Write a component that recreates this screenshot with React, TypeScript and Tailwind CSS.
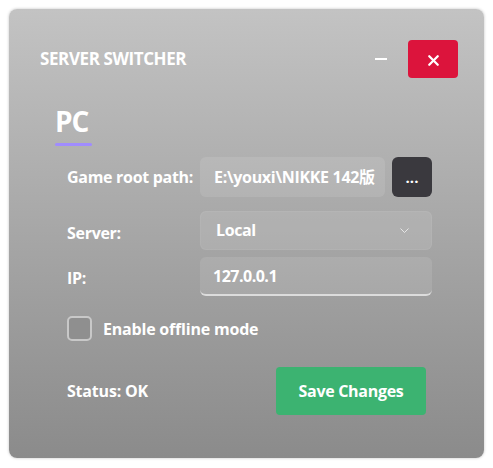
import { X } from "lucide-react"

const font = { fontFamily: '"Open Sans", "Noto Sans CJK SC", sans-serif' }

export default function App() {
  return (
    <div className="w-[493px] h-[468px] bg-white pt-[9px] pl-[9px]" style={font}>
      <div className="w-[475px] h-[449px] rounded-[8px] bg-gradient-to-b from-[#c3c3c3] to-[#8b8b8b] shadow-[0_0_3px_rgba(0,0,0,0.25)] pt-[31px] pl-[31px] pr-[26px] text-white">
        {/* Header */}
        <div className="flex items-center justify-between h-[38px]">
          <span className="text-[17px] font-bold tracking-[-0.4px]">SERVER SWITCHER</span>
          <div className="flex items-center gap-[21px]">
            <div className="w-[12px] h-[2px] bg-white" />
            <button className="w-[50px] h-[38px] rounded-[4px] bg-[#dc143c] flex items-center justify-center pt-[2px]">
              <X className="w-[17px] h-[17px] text-white" strokeWidth={3.2} />
            </button>
          </div>
        </div>

        {/* Tab */}
        <div className="ml-[15px] mt-[26px] w-fit">
          <div className="text-[28px] font-bold leading-[34px] tracking-[-1px]">PC</div>
          <div className="mt-[5px] h-[3px] w-[37px] rounded-full bg-[#a08cff]" />
        </div>

        {/* Form */}
        <div className="ml-[27px] mt-[11px] flex flex-col">
          <div className="flex items-center h-[40px]">
            <span className="w-[133px] text-[16px] font-bold tracking-[-0.3px]">Game root path:</span>
            <div className="w-[185px] h-[40px] rounded-[6px] bg-white/10 flex items-center pl-[14px] text-[16px] font-bold tracking-[-0.3px] whitespace-nowrap overflow-hidden">
              E:\youxi\NIKKE 142版
            </div>
            <button className="ml-[7px] w-[40px] h-[40px] rounded-[6px] bg-[#3a393e] text-white text-[15px] font-bold leading-none flex items-end justify-center pb-[12px]">
              ...
            </button>
          </div>

          <div className="flex items-center h-[39px] mt-[14px]">
            <span className="w-[133px] text-[16px] font-bold tracking-[-0.3px] pt-[4px]">Server:</span>
            <div className="w-[232px] h-[39px] rounded-[6px] bg-white/10 border border-white/5 flex items-center justify-between pl-[15px] pr-[22px] text-[16px] font-bold tracking-[-0.4px]">
              <span className="-mt-[2px]">Local</span>
              <svg width="9" height="5" viewBox="0 0 9 5" fill="none">
                <path d="M0.5 0.5 L4.5 4.5 L8.5 0.5" stroke="#e6e6e6" strokeWidth="1" />
              </svg>
            </div>
          </div>

          <div className="flex items-center h-[39px] mt-[7px]">
            <span className="w-[133px] text-[16px] font-bold tracking-[-0.3px] pt-[2px]">IP:</span>
            <div className="w-[232px] h-[39px] rounded-[6px] bg-white/10 border-b-2 border-white/60 flex items-center pl-[13px] text-[16px] font-bold tracking-[-0.5px]">
              <span>127.0.0.1</span>
            </div>
          </div>

          <label className="flex items-center mt-[20px] gap-[11px]">
            <span className="w-[25px] h-[25px] rounded-[5px] border-2 border-[#c8c8c8] bg-[#8f8f8f]" />
            <span className="text-[16px] font-bold tracking-[-0.2px]">Enable offline mode</span>
          </label>

          <div className="flex items-center justify-between mt-[26px] w-[359px]">
            <span className="text-[16px] font-bold tracking-[-0.2px]">Status: OK</span>
            <button className="w-[150px] h-[48px] rounded-[4px] bg-[#3cb371] text-white text-[16px] font-bold tracking-[-0.3px]">
              Save Changes
            </button>
          </div>
        </div>
      </div>
    </div>
  )
}
